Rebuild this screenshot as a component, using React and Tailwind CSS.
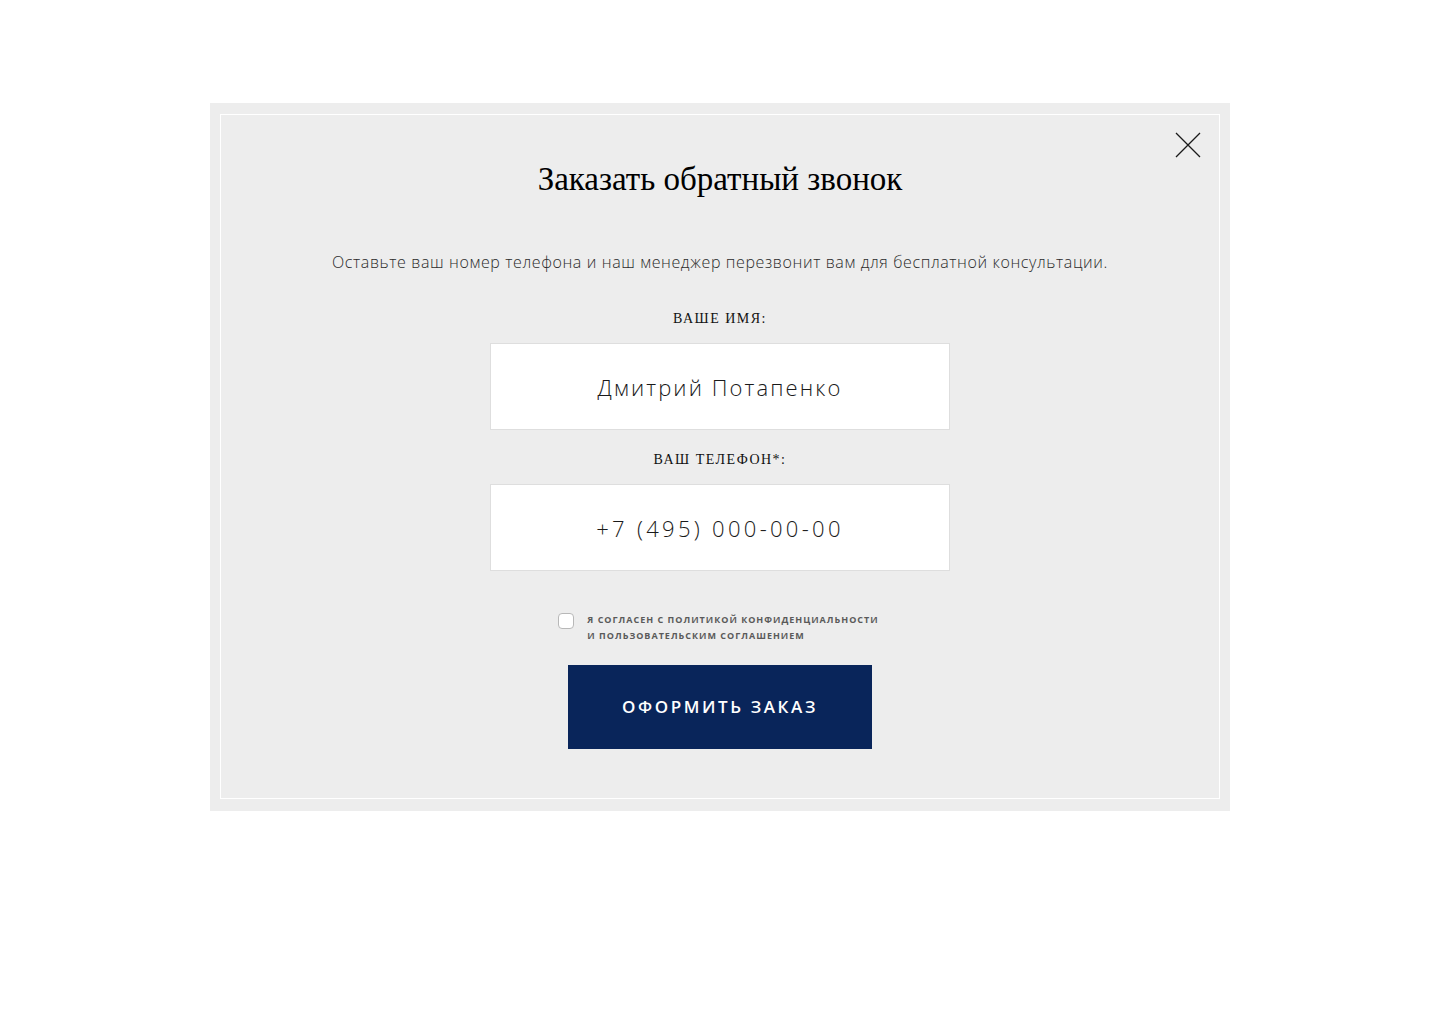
import React, { useState } from 'react'

const serif = { fontFamily: '"Liberation Serif", "DejaVu Serif", serif' }

export default function App() {
  const [name, setName] = useState('Дмитрий Потапенко')
  const [phone, setPhone] = useState('+7 (495) 000-00-00')
  const [agree, setAgree] = useState(false)

  return (
    <div className="min-h-[1031px] bg-white pt-[103px] font-['Open_Sans',sans-serif]">
      <div className="mx-auto w-[1020px] bg-[#ededed] px-[10px] pt-[11px] pb-[12px]">
        <div className="relative flex h-[685px] flex-col items-center border border-white pt-[44px]">
          <button className="absolute right-[18px] top-[17px] h-[26px] w-[26px]" aria-label="Закрыть">
            <svg viewBox="0 0 26 26" className="h-[26px] w-[26px]">
              <path d="M1 1 L25 25 M25 1 L1 25" stroke="#1a1a1a" strokeWidth="1.3" fill="none" />
            </svg>
          </button>

          <h2 className="text-[33px] leading-[40px] text-black" style={serif}>
            Заказать обратный звонок
          </h2>

          <p className="mt-[51px] text-[16px] font-light leading-[24px] tracking-[0.62px] text-[#2b2b2b]">
            Оставьте ваш номер телефона и наш менеджер перезвонит вам для бесплатной консультации.
          </p>

          <label className="mt-[35px] text-[14px] uppercase leading-[20px] tracking-[1.5px] text-[#111]" style={serif}>
            Ваше имя:
          </label>
          <input
            value={name}
            onChange={(e) => setName(e.target.value)}
            className="mt-[14px] h-[87px] w-[460px] border border-[#dedede] bg-white text-center text-[22px] font-light tracking-[2.1px] text-[#1a1a1a] outline-none"
          />

          <label className="mt-[20px] text-[14px] uppercase leading-[20px] tracking-[1.5px] text-[#111]" style={serif}>
            Ваш телефон*:
          </label>
          <input
            value={phone}
            onChange={(e) => setPhone(e.target.value)}
            className="mt-[14px] h-[87px] w-[460px] border border-[#dedede] bg-white text-center text-[22px] font-light tracking-[3.3px] text-[#1a1a1a] outline-none"
          />

          <label className="mt-[41px] flex cursor-pointer items-start gap-[13px] pr-[3px]">
            <span
              onClick={() => setAgree(!agree)}
              className="mt-[1px] flex h-[16px] w-[16px] shrink-0 items-center justify-center rounded-[4px] border border-[#b8b8b8] bg-white"
            >
              {agree && (
                <svg viewBox="0 0 12 12" className="h-[10px] w-[10px]">
                  <path d="M2 6 L5 9 L10 3" stroke="#0b2659" strokeWidth="1.6" fill="none" />
                </svg>
              )}
            </span>
            <span className="text-[9px] font-bold uppercase leading-[16px] tracking-[1px] text-[#5a5a5a]">
              Я согласен с политикой конфиденциальности
              <br />
              и пользовательским соглашением
            </span>
          </label>

          <button className="mt-[21px] h-[84px] w-[304px] bg-[#09255a] text-[17px] font-semibold uppercase tracking-[2.6px] text-white">
            Оформить заказ
          </button>
        </div>
      </div>
    </div>
  )
}
